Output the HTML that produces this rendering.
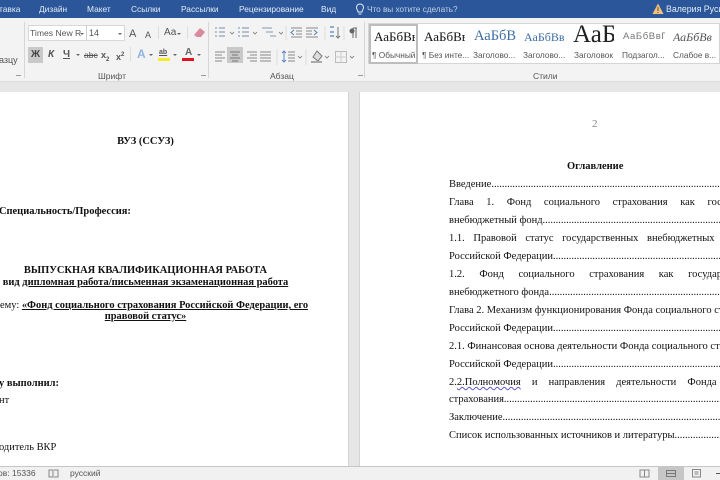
<!DOCTYPE html>
<html lang="ru"><head><meta charset="utf-8"><style>
html,body{margin:0;padding:0;width:720px;height:480px;overflow:hidden;background:#e6e6e6}
*{box-sizing:border-box}
#r{position:relative;width:720px;height:480px;overflow:hidden;font-family:"Liberation Sans",sans-serif;filter:blur(.25px)}
.a{position:absolute;white-space:nowrap}
.tab{position:absolute;top:3px;font-size:8.4px;line-height:12px;color:#e4eaf4;white-space:nowrap}
.rb{position:absolute;font-size:9px;line-height:12px;color:#555;white-space:nowrap}
.s{position:absolute;white-space:nowrap;font-family:"Liberation Serif",serif;color:#111}
.d{position:absolute;white-space:nowrap;font-family:"Liberation Serif",serif;font-size:10.5px;line-height:14px;color:#111}
.p{font-size:10.45px}
.c{text-align:center;left:0;width:291px}
b{font-weight:bold}
.sep{position:absolute;top:22px;width:1px;height:56px;background:#d6d6d6}
.l{position:absolute;background:#777}
.ar{position:absolute;width:0;height:0;border-left:2px solid transparent;border-right:2px solid transparent;border-top:2px solid #666}
</style></head><body><div id="r">
<div class="a" style="left:0;top:0;width:720px;height:18px;background:#2b579a"></div>
<div class="tab" style="left:-1px">тавка</div><div class="tab" style="left:39px">Дизайн</div><div class="tab" style="left:87px">Макет</div><div class="tab" style="left:131px">Ссылки</div><div class="tab" style="left:181px">Рассылки</div><div class="tab" style="left:239px">Рецензирование</div><div class="tab" style="left:321px">Вид</div>
<svg class="a" style="left:355px;top:3px" width="10" height="13" viewBox="0 0 10 13"><path d="M3 9C3 7 1.500 6.500 1.500 4.500A3.500 3.500 0 0 1 8.500 4.500C8.500 6.500 7 7 7 9ZM3.500 11H6.500" fill="none" stroke="#e4eaf4"/></svg>
<div class="tab" style="left:367px;top:4px;color:#c3d0e6;font-size:8.2px">Что вы хотите сделать?</div>
<svg class="a" style="left:652px;top:3px" width="12" height="12" viewBox="0 0 12 12"><path d="M6 .5L11.500 11H.5Z" fill="#f2c27c"/><path d="M6 4V8M6 9V10" stroke="#5c4a2e"/></svg>
<div class="tab" style="left:666px;font-size:8.8px">Валерия Русин</div>

<div class="a" style="left:0;top:18px;width:720px;height:64px;background:#f3f3f3;border-bottom:1px solid #dcdcdc"></div>
<div class="rb" style="left:-1px;top:54px">азцу</div>
<div class="sep" style="left:24px"></div><div class="sep" style="left:208px"></div><div class="sep" style="left:364px"></div>
<div class="a" style="left:28px;top:25px;width:97px;height:16px;background:#fff;border:1px solid #d8d8d8"></div>
<div class="a" style="left:86px;top:25px;width:1px;height:16px;background:#ccc"></div>
<div class="rb" style="left:30px;top:27px;font-size:8.600px">Times New R</div><div class="ar" style="left:80px;top:33px"></div>
<div class="rb" style="left:89px;top:27px;font-size:9px">14</div><div class="ar" style="left:118px;top:33px"></div>
<div class="rb" style="left:129px;top:28px;font-size:11px">A</div><div class="rb" style="left:145px;top:29px;font-size:9px">A</div>
<div class="rb" style="left:164px;top:27px;font-size:10px">Аа</div><div class="ar" style="left:177px;top:33px"></div>
<div class="a" style="left:158px;top:26px;width:1px;height:13px;background:#ddd"></div><div class="a" style="left:187px;top:26px;width:1px;height:13px;background:#ddd"></div>
<svg class="a" style="left:193px;top:26px" width="13" height="13" viewBox="0 0 13 13"><path d="M1 9L7 2L12 6L8 11H4Z" fill="#d98a9c"/></svg>

<div class="a" style="left:28px;top:47px;width:15px;height:16px;background:#c9c9c9"></div>
<div class="s" style="left:31px;top:49px;font:bold 10px/12px 'Liberation Sans',sans-serif;color:#444">Ж</div>
<div class="s" style="left:48px;top:49px;font:italic bold 10px/12px 'Liberation Sans',sans-serif;color:#555">К</div>
<div class="s" style="left:63px;top:49px;font:bold 10px/12px 'Liberation Sans',sans-serif;color:#555;text-decoration:underline">Ч</div><div class="ar" style="left:76px;top:54px"></div>
<div class="rb" style="left:84px;top:49px;font-size:8.500px;text-decoration:line-through">abc</div>
<div class="rb" style="left:101px;top:49px;font-weight:bold">x<sub style="font-size:6px">2</sub></div>
<div class="rb" style="left:116px;top:49px;font-weight:bold">x<sup style="font-size:6px">2</sup></div>
<div class="a" style="left:130px;top:47px;width:1px;height:14px;background:#ddd"></div>
<div class="rb" style="left:137px;top:48px;font-size:12px;font-weight:bold;color:#8fb4e3">A</div><div class="ar" style="left:149px;top:54px"></div>
<div class="rb" style="left:159px;top:47px;font-size:7px;font-weight:bold;text-decoration:underline">ab</div><div class="a" style="left:158px;top:58px;width:12px;height:3px;background:#f5ec2e"></div><div class="ar" style="left:173px;top:54px"></div>
<div class="rb" style="left:185px;top:47px;font-size:10px;font-weight:bold;color:#666">A</div><div class="a" style="left:182px;top:58px;width:12px;height:3px;background:#e0141e"></div><div class="ar" style="left:197px;top:54px"></div>
<div class="rb" style="left:98px;top:70px;font-size:8.500px">Шрифт</div>
<div class="l" style="left:16px;top:75px;width:5px;height:1px;background:#999"></div><div class="l" style="left:201px;top:75px;width:5px;height:1px;background:#999"></div><div class="l" style="left:358px;top:75px;width:5px;height:1px;background:#999"></div>

<div class="a" style="left:227px;top:47px;width:16px;height:16px;background:#c9c9c9"></div>
<svg class="a" style="left:200px;top:15px" width="165" height="50" viewBox="0 0 165 50" fill="none">
<path d="M15 13H17M19 13H25M15 17H17M19 17H25M15 21H17M19 21H25" stroke="#7d8ea8"/>
<path d="M38 13H40M42 13H49M38 17H40M42 17H49M38 21H40M42 21H49" stroke="#7d8ea8"/>
<path d="M62 13H65M65 13H72M66 17H73M70 21H76" stroke="#8a9ab0"/>
<path d="M30 17L32 19L34 17M53 17L55 19L57 17M79 17L81 19L83 17" stroke="#777" stroke-width=".8"/>
<path d="M91 13H102M96 16H102M96 19H102M91 22H102" stroke="#8a8a8a"/><path d="M94 15L91 17.500L94 20" stroke="#4f7fc0"/>
<path d="M106 13H118M106 16H112M106 19H112M106 22H118" stroke="#8a8a8a"/><path d="M114 15L117 17.500L114 20" stroke="#4f7fc0"/>
<path d="M86 11V25M125 11V25M144 11V25" stroke="#ddd"/>
<path d="M130 12H134M130 17H134M130 21H134" stroke="#6f94c8" stroke-width="1.500"/><path d="M138 12V23M136 21L138 23L140 21" stroke="#777"/>
<path d="M153 13V23M156 13V23M153 13H157" stroke="#666"/><circle cx="152" cy="16" r="2.500" fill="#666"/>
<path d="M15 37H25M15 40H22M15 43H25M15 46H22" stroke="#8a8a8a"/>
<path d="M30 37H40M32 40H38M30 43H40M32 46H38" stroke="#777"/>
<path d="M47 37H57M50 40H57M47 43H57M50 46H57" stroke="#8a8a8a"/>
<path d="M60 37H71M60 40H71M60 43H71M60 46H71" stroke="#8a8a8a"/>
<path d="M77 34V50M106 34V50" stroke="#ddd"/>
<path d="M84 36V47M82 38L84 36L86 38M82 45L84 47L86 45" stroke="#5f88c0"/><path d="M88 37H95M88 40H95M88 43H95M88 46H95" stroke="#888"/>
<path d="M98 41L100 43L102 41M125 41L127 43L129 41M150 41L152 43L154 41" stroke="#777" stroke-width=".8"/>
<path d="M113 42L117 36L122 41L118 46Z" fill="#ddd" stroke="#777"/><path d="M111 47H122" stroke="#aaa" stroke-width="2"/>
<rect x="135.500" y="36.500" width="11" height="11" stroke="#bbb"/><path d="M141 36V48M135 42H147" stroke="#ccc"/>
</svg>
<div class="rb" style="left:270px;top:70px;font-size:8.500px">Абзац</div>

<div class="a" style="left:368px;top:23px;width:352px;height:41px;background:#fff;border:1px solid #d5d5d5"></div>
<div class="a" style="left:369px;top:24px;width:49px;height:40px;border:2px solid #bdbdbd"></div>
<div class="s" style="left:374px;top:30px;width:41px;overflow:hidden;font-size:13px;line-height:14px">АаБбВв</div>
<div class="s" style="left:424px;top:30px;width:41px;overflow:hidden;font-size:13px;line-height:14px">АаБбВв</div>
<div class="s" style="left:474px;top:28px;width:42px;overflow:hidden;font-size:14.500px;line-height:17px;color:#3f6ea6">АаБбВ</div>
<div class="s" style="left:524px;top:30px;width:42px;overflow:hidden;font-size:12px;line-height:14px;color:#3f6ea6">АаБбВв</div>
<div class="s" style="left:573px;top:20px;width:41px;overflow:hidden;font-size:25px;line-height:30px;color:#222">АаБб</div>
<div class="s" style="left:623px;top:31px;width:42px;overflow:hidden;font:9.500px/12px 'Liberation Sans',sans-serif;letter-spacing:.6px;color:#777">АаБбВвГ</div>
<div class="s" style="left:673px;top:30px;width:45px;overflow:hidden;font-size:12px;line-height:14px;font-style:italic;color:#555">АаБбВв</div>
<div class="rb" style="left:372px;top:49px;font-size:8.300px">¶ Обычный</div><div class="rb" style="left:422px;top:49px;font-size:8.300px">¶ Без инте...</div><div class="rb" style="left:473px;top:49px;font-size:8.300px">Заголово...</div><div class="rb" style="left:523px;top:49px;font-size:8.300px">Заголово...</div><div class="rb" style="left:574px;top:49px;font-size:8.300px">Заголовок</div><div class="rb" style="left:622px;top:49px;font-size:8.300px">Подзагол...</div><div class="rb" style="left:673px;top:49px;font-size:8.300px">Слабое в...</div>
<div class="rb" style="left:533px;top:70px;font-size:8.500px">Стили</div>

<div class="a" style="left:0;top:92px;width:349px;height:374px;background:#fff;border-right:1px solid #d4d4d4"></div>
<div class="a" style="left:359px;top:92px;width:361px;height:374px;background:#fff;border-left:1px solid #d4d4d4"></div>

<div class="d c p" style="top:135px"><b>ВУЗ (ССУЗ)</b></div>
<div class="d p" style="left:-1px;top:205px"><b>Специальность/Профессия:</b></div>
<div class="d c p" style="top:264px"><b>ВЫПУСКНАЯ КВАЛИФИКАЦИОННАЯ РАБОТА</b></div>
<div class="d c p" style="top:276px"><b>вид <u>дипломная работа/письменная экзаменационная работа</u></b></div>
<div class="d p" style="left:0;top:299px">ему: <b><u>«Фонд социального страхования Российской Федерации, его</u></b></div>
<div class="d c p" style="top:310px"><b><u>правовой статус»</u></b></div>
<div class="d p" style="left:-1px;top:377px"><b>у выполнил:</b></div>
<div class="d p" style="left:-1px;top:394px">нт</div>
<div class="d p" style="left:-1px;top:441px">одитель ВКР</div>

<div class="a" style="left:592px;top:117px;font:11px/14px 'Liberation Serif',serif;color:#888">2</div>
<div class="d" style="left:567px;top:160px"><b>Оглавление</b></div>
<div class="d" style="left:449px;top:178px">Введение..............................................................................................................................</div>
<div class="d" style="left:449px;top:196px;word-spacing:10px">Глава 1. Фонд социального страхования как государственный</div>
<div class="d" style="left:449px;top:214px">внебюджетный фонд.............................................................................................................</div>
<div class="d" style="left:449px;top:232px;word-spacing:6px">1.1. Правовой статус государственных внебюджетных фондов</div>
<div class="d" style="left:449px;top:250px">Российской Федерации.........................................................................................................</div>
<div class="d" style="left:449px;top:268px;word-spacing:12px">1.2. Фонд социального страхования как государственного</div>
<div class="d" style="left:449px;top:286px">внебюджетного фонда...........................................................................................................</div>
<div class="d" style="left:449px;top:304px">Глава 2. Механизм функционирования Фонда социального страхования</div>
<div class="d" style="left:449px;top:322px">Российской Федерации.........................................................................................................</div>
<div class="d" style="left:449px;top:340px">2.1. Финансовая основа деятельности Фонда социального страхования</div>
<div class="d" style="left:449px;top:358px">Российской Федерации.........................................................................................................</div>
<div class="d" style="left:449px;top:376px;word-spacing:8.500px">2.<span style="text-decoration:underline wavy #5a5ac8;text-decoration-thickness:1px">2.Полномочия</span> и направления деятельности Фонда социального</div>
<div class="d" style="left:449px;top:393px">страхования..........................................................................................................................</div>
<div class="d" style="left:449px;top:411px">Заключение............................................................................................................................</div>
<div class="d" style="left:449px;top:429px">Список использованных источников и литературы..............................................</div>

<div class="a" style="left:0;top:466px;width:720px;height:14px;background:#f1f1f1;border-top:1px solid #c6c6c6"></div>
<div class="rb" style="left:-2px;top:467px;font-size:8.500px">ов: 15336</div>
<svg class="a" style="left:48px;top:469px" width="11" height="9" viewBox="0 0 11 9"><path d="M1 1H5V8H1ZM6 1H10V8H6" fill="none" stroke="#888"/></svg>
<div class="rb" style="left:70px;top:467px;font-size:8.500px">русский</div>
<div class="a" style="left:658px;top:466px;width:26px;height:14px;background:#c6c6c6"></div>
<svg class="a" style="left:639px;top:469px" width="81" height="9" viewBox="0 0 81 9" fill="none" stroke="#888"><path d="M1 1H10V8H1ZM5.500 1V8"/><rect x="27.500" y="1.500" width="9" height="6" stroke="#777"/><path d="M27 4.500H37" stroke="#777"/><path d="M53.500 .5H61.500V8H53.500ZM55.500 3H59.500M55.500 5H59.500"/><path d="M77 4.500H81" stroke="#555"/></svg>
</div></body></html>
